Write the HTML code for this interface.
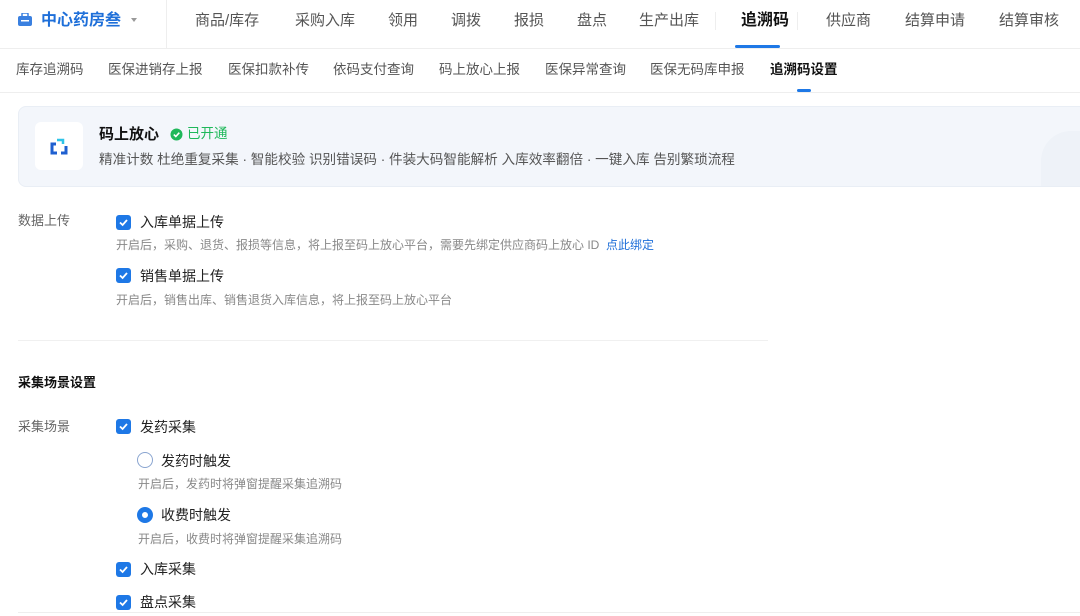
<!DOCTYPE html>
<html><head><meta charset="utf-8"><style>
*{margin:0;padding:0;box-sizing:border-box}
body{width:1080px;height:616px;overflow:hidden;background:#fff;font-family:"Liberation Sans","Noto Sans CJK SC",sans-serif;color:#333;position:relative}
.a{position:absolute;white-space:nowrap}
.n{font-size:15px;color:#555;line-height:20px;top:11px}
.s{font-size:13.5px;color:#555;line-height:18px;top:61px}
.cb{position:absolute;width:15px;height:15px;background:#1e78e6;border-radius:3px}
.cb svg{position:absolute;left:2px;top:2px}
.t14{font-size:14px;color:#222;line-height:18px}
.d{font-size:12px;color:#888;line-height:16px}
.lbl{font-size:13px;color:#666;line-height:18px}
</style></head><body>
<div class="a" style="left:0;top:48px;width:1080px;height:1px;background:#eee"></div>
<div class="a" style="left:166px;top:0;width:1px;height:48px;background:#eee"></div>
<svg class="a" style="left:18px;top:13px" width="14" height="13"><rect x="0" y="3" width="14" height="10" rx="2" fill="#3a80e0"/><rect x="4" y="0" width="6" height="4" rx="1" fill="none" stroke="#3a80e0" stroke-width="1.5"/><rect x="3" y="7" width="8" height="1.5" fill="#fff"/></svg>
<div class="a" style="left:41px;top:10px;font-size:16px;line-height:22px;color:#1e6fd9;font-weight:bold">中心药房叁</div>
<div class="a" style="left:131px;top:18px;width:0;height:0;border-left:3px solid transparent;border-right:3px solid transparent;border-top:4px solid #999"></div>
<div class="a n" style="left:195px">商品/库存</div>
<div class="a n" style="left:295px">采购入库</div>
<div class="a n" style="left:388px">领用</div>
<div class="a n" style="left:451px">调拨</div>
<div class="a n" style="left:514px">报损</div>
<div class="a n" style="left:577px">盘点</div>
<div class="a n" style="left:639px">生产出库</div>
<div class="a" style="left:715px;top:12px;width:1px;height:18px;background:#eee"></div>
<div class="a n" style="left:741px;color:#111;font-weight:bold;font-size:16px">追溯码</div>
<div class="a" style="left:735px;top:45px;width:45px;height:3px;background:#1e78e6;border-radius:2px"></div>
<div class="a" style="left:797px;top:12px;width:1px;height:18px;background:#eee"></div>
<div class="a n" style="left:826px">供应商</div>
<div class="a n" style="left:905px">结算申请</div>
<div class="a n" style="left:999px">结算审核</div>

<div class="a" style="left:0;top:92px;width:1080px;height:1px;background:#eee"></div>
<div class="a s" style="left:16px">库存追溯码</div>
<div class="a s" style="left:108px">医保进销存上报</div>
<div class="a s" style="left:228px">医保扣款补传</div>
<div class="a s" style="left:333px">依码支付查询</div>
<div class="a s" style="left:439px">码上放心上报</div>
<div class="a s" style="left:545px">医保异常查询</div>
<div class="a s" style="left:650px">医保无码库申报</div>
<div class="a s" style="left:770px;color:#111;font-weight:bold">追溯码设置</div>
<div class="a" style="left:797px;top:89px;width:14px;height:3px;background:#1e78e6;border-radius:2px"></div>

<div class="a" style="left:18px;top:106px;width:1080px;height:81px;background:#f3f6fb;border:1px solid #e9eef5;border-radius:8px;overflow:hidden"><div style="position:absolute;left:1022px;top:24px;width:80px;height:60px;background:#eef2f8;border-radius:30px 0 0 0"></div></div>
<div class="a" style="left:35px;top:122px;width:48px;height:48px;background:#fff;border-radius:6px"></div>
<svg class="a" style="left:50px;top:138px" width="18" height="18"><path d="M7 2H13V6" fill="none" stroke="#2ec4e8" stroke-width="2.5"/><path d="M6 6H2V15H7M11 15H16V8" fill="none" stroke="#1e5fd0" stroke-width="3"/></svg>
<div class="a" style="left:99px;top:125px;font-size:15px;line-height:20px;color:#111;font-weight:bold">码上放心</div>
<svg class="a" style="left:170px;top:128px" width="13" height="13"><circle cx="6.5" cy="6.5" r="6" fill="#1fb85a"/><path d="M3.8 6.6L5.8 8.5 9.3 4.7" fill="none" stroke="#fff" stroke-width="1.6"/></svg>
<div class="a" style="left:187px;top:125px;font-size:13.5px;line-height:18px;color:#1fb85a">已开通</div>
<div class="a" style="left:99px;top:151px;font-size:13.6px;line-height:18px;color:#555">精准计数 杜绝重复采集 · 智能校验 识别错误码 · 件装大码智能解析 入库效率翻倍 · 一键入库 告别繁琐流程</div>

<div class="a lbl" style="left:18px;top:212px">数据上传</div>
<div class="cb" style="left:116px;top:215px"><svg width="11" height="11"><path d="M2 5.5L4.6 8 9 3" fill="none" stroke="#fff" stroke-width="1.8"/></svg></div>
<div class="a t14" style="left:140px;top:213px">入库单据上传</div>
<div class="a d" style="left:116px;top:237px">开启后，采购、退货、报损等信息，将上报至码上放心平台，需要先绑定供应商码上放心 ID&nbsp;&nbsp;<span style="color:#1e6fd9">点此绑定</span></div>
<div class="cb" style="left:116px;top:268px"><svg width="11" height="11"><path d="M2 5.5L4.6 8 9 3" fill="none" stroke="#fff" stroke-width="1.8"/></svg></div>
<div class="a t14" style="left:140px;top:267px">销售单据上传</div>
<div class="a d" style="left:116px;top:292px">开启后，销售出库、销售退货入库信息，将上报至码上放心平台</div>
<div class="a" style="left:18px;top:340px;width:750px;height:1px;background:#f0f0f0"></div>

<div class="a" style="left:18px;top:374px;font-size:13px;line-height:18px;color:#111;font-weight:bold">采集场景设置</div>
<div class="a lbl" style="left:18px;top:418px">采集场景</div>
<div class="cb" style="left:116px;top:419px"><svg width="11" height="11"><path d="M2 5.5L4.6 8 9 3" fill="none" stroke="#fff" stroke-width="1.8"/></svg></div>
<div class="a t14" style="left:140px;top:418px">发药采集</div>
<div class="a" style="left:137px;top:452px;width:16px;height:16px;border:1px solid #8aa5d0;border-radius:50%"></div>
<div class="a t14" style="left:161px;top:452px">发药时触发</div>
<div class="a d" style="left:138px;top:476px">开启后，发药时将弹窗提醒采集追溯码</div>
<div class="a" style="left:137px;top:507px;width:16px;height:16px;border:5px solid #1e78e6;border-radius:50%;background:#fff"></div>
<div class="a t14" style="left:161px;top:506px">收费时触发</div>
<div class="a d" style="left:138px;top:531px">开启后，收费时将弹窗提醒采集追溯码</div>
<div class="cb" style="left:116px;top:562px"><svg width="11" height="11"><path d="M2 5.5L4.6 8 9 3" fill="none" stroke="#fff" stroke-width="1.8"/></svg></div>
<div class="a t14" style="left:140px;top:560px">入库采集</div>
<div class="cb" style="left:116px;top:595px"><svg width="11" height="11"><path d="M2 5.5L4.6 8 9 3" fill="none" stroke="#fff" stroke-width="1.8"/></svg></div>
<div class="a t14" style="left:140px;top:593px">盘点采集</div>
<div class="a" style="left:18px;top:612px;width:1062px;height:1px;background:#eee"></div>
</body></html>
